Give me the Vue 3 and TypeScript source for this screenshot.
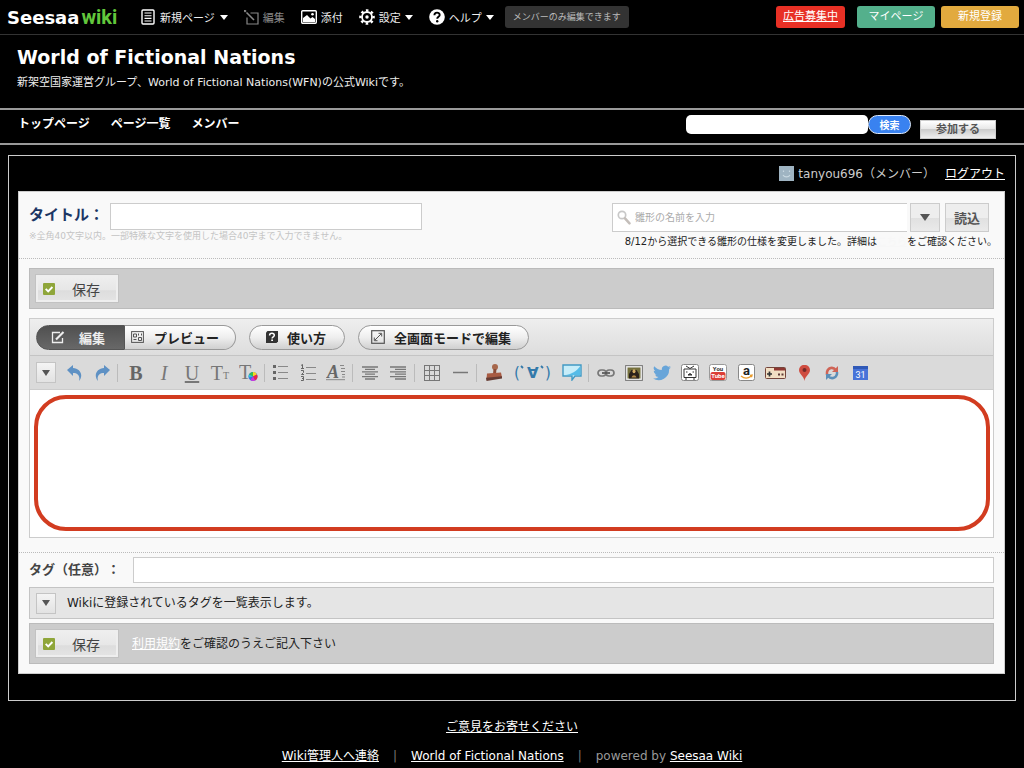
<script setup lang="ts">
import { ref } from 'vue'

const search = ref('')
const title = ref('')
const template = ref('')
const body = ref('')
const tags = ref('')
const navigation: string[] = ['トップページ', 'ページ一覧', 'メンバー']
</script>

<template>
  <div class="page">
    <header class="topbar">
      <a class="logo" href="#"><span class="logo-name">Seesaa</span><span class="logo-wiki">wiki</span></a>
      <nav class="menu" aria-label="ツール">
        <button class="menu-item new" type="button">
          <svg width="14" height="16" viewBox="0 0 14 16" fill="none" stroke="#fff" stroke-width="1.4"><rect x="1" y="1" width="12" height="14" rx="1" /><path d="M3.5 4h7M3.5 6.7h7M3.5 9.4h7M3.5 12h7" stroke-width="1.1" /></svg>
          <span>新規ページ</span><i class="caret"></i>
        </button>
        <button class="menu-item edit" type="button">
          <svg width="15" height="15" viewBox="0 0 15 15" fill="none" stroke="#888" stroke-width="1.2"><path d="M6.500 3H14v11H3V7.500" /><path d="M2.500 2.500l7.500 7.500" stroke-width="1.600" /><path d="M0 0l1.800 1.800" stroke-width="2.200" /></svg>
          <span>編集</span>
        </button>
        <button class="menu-item attach" type="button">
          <svg width="16" height="14" viewBox="0 0 16 14"><rect x=".7" y=".7" width="14.6" height="12.6" rx="1" fill="none" stroke="#fff" stroke-width="1.4" /><path d="M2 12V8l4-3 3.500 3.600L11.500 7l2.500 2v3z" fill="#fff" /><circle cx="11.5" cy="4.200" r="1.300" fill="#fff" /></svg>
          <span>添付</span>
        </button>
        <button class="menu-item settings" type="button">
          <svg width="16" height="16" viewBox="0 0 16 16" fill="none" stroke="#fff"><circle cx="8" cy="8" r="5" stroke-width="1.8" /><circle cx="8" cy="8" r="6.6" stroke-width="2.4" stroke-dasharray="2.5 2.68" stroke-dashoffset="1.25" /><circle cx="8" cy="8" r="1.7" fill="#fff" stroke="none" /></svg>
          <span>設定</span><i class="caret"></i>
        </button>
        <button class="menu-item help" type="button">
          <svg width="16" height="16" viewBox="0 0 16 16"><circle cx="8" cy="8" r="7.8" fill="#fff" /><path d="M5.4 6.2c0-3.5 5.3-3.3 5.3-.3 0 1.9-2.5 1.9-2.5 3.9" fill="none" stroke="#000" stroke-width="1.9" /><circle cx="8.2" cy="12.2" r="1.2" /></svg>
          <span>ヘルプ</span><i class="caret"></i>
        </button>
      </nav>
      <span class="member-only">メンバーのみ編集できます</span>
      <div class="account">
        <a class="pill ad" href="#">広告募集中</a>
        <a class="pill mypage" href="#">マイページ</a>
        <a class="pill signup" href="#">新規登録</a>
      </div>
    </header>

    <div class="site-head">
      <h1>World of Fictional Nations</h1>
      <p>新架空国家運営グループ、World of Fictional Nations(WFN)の公式Wikiです。</p>
    </div>

    <div class="site-nav">
      <nav class="links" aria-label="サイト">
        <a v-for="item in navigation" :key="item" href="#">{{ item }}</a>
      </nav>
      <form class="search" @submit.prevent>
        <input v-model="search" type="text" aria-label="検索" />
        <button class="search-button" type="submit">検索</button>
      </form>
      <button class="join" type="button">参加する</button>
    </div>

    <main class="frame">
      <div class="user">
        <svg width="15" height="15" viewBox="0 0 15 15"><rect width="15" height="15" fill="#9fb4c2" /><path d="M4.5 4.5v1.6M10.5 4.5v1.6M4 9c1.5 2.6 5.500 2.600 7 0" fill="none" stroke="#c9d8e1" stroke-width="1.2" /></svg>
        <span>tanyou696（メンバー）</span>
        <a href="#">ログアウト</a>
      </div>

      <div class="panel">
        <section class="title-area">
          <div class="title-side">
            <div class="title-row">
              <label for="page-title">タイトル：</label>
              <input id="page-title" v-model="title" class="field" type="text" />
            </div>
            <p class="hint">※全角40文字以内。一部特殊な文字を使用した場合40字まで入力できません。</p>
          </div>
          <div class="template-side">
            <div class="template-row">
              <div class="template-search">
                <svg width="14" height="15" viewBox="0 0 14 15" fill="none"><circle cx="5" cy="5" r="3.7" stroke="#c8c8c8" stroke-width="1.7" /><path d="M8 8.300l4.500 5" stroke="#c4beba" stroke-width="2.500" stroke-linecap="round" /></svg>
                <input v-model="template" type="text" placeholder="雛形の名前を入力" aria-label="雛形の名前" />
              </div>
              <button class="gray-button drop" type="button" aria-label="雛形の一覧"><i class="caret dark"></i></button>
              <button class="gray-button load" type="button">読込</button>
            </div>
            <p class="notice">8/12から選択できる雛形の仕様を変更しました。詳細は<a href="#">こちら</a>をご確認ください。</p>
          </div>
        </section>

        <section class="save-bar">
          <button class="save" type="button">
            <svg width="12" height="12" viewBox="0 0 12 12"><rect width="12" height="12" rx="1" fill="#8fa63a" /><path d="M2.700 5.800l2.500 2.600L9.400 4" fill="none" stroke="#fff" stroke-width="1.900" /></svg>
            <span>保存</span>
          </button>
        </section>

        <section class="editor">
          <div class="modes">
            <div class="switch">
              <button class="mode active" type="button">
                <svg width="14" height="13" viewBox="0 0 14 13" fill="none" stroke="#eee"><path d="M9 1.500H1.500v10h10V7" stroke-width="1.300" /><path d="M5 8.500L12.500 1" stroke-width="2.200" /></svg>
                <span>編集</span>
              </button>
              <button class="mode preview" type="button">
                <svg width="13" height="12" viewBox="0 0 13 12" fill="none" stroke="#555"><rect x=".6" y=".6" width="11.800" height="10.800" /><path d="M2.500 3h3v3h-3zM2.500 8.500h3M7.500 2.500v2M10.500 2.500v2M7.500 6.500h3v3h-3z" /></svg>
                <span>プレビュー</span>
              </button>
            </div>
            <button class="mode round usage" type="button">
              <svg width="12" height="12" viewBox="0 0 12 12"><path d="M1.500 0H12v10.500L10.500 12H0V1.500z" fill="#333" /><path d="M3.600 4.500c.1-3 5-2.700 4.700 0-.2 1.400-2.200 1.300-2.200 3" fill="none" stroke="#fff" stroke-width="1.500" /><path d="M5.200 8.500h1.800v1.500H5.200z" fill="#fff" /></svg>
              <span>使い方</span>
            </button>
            <button class="mode round full" type="button">
              <svg width="14" height="14" viewBox="0 0 14 14" fill="none" stroke="#555"><rect x=".7" y=".7" width="12.600" height="12.600" stroke-width="1.200" /><path d="M4 10l6-6M7.500 3.300h3.200v3.200M3.300 7.500v3.200h3.200" /></svg>
              <span>全画面モードで編集</span>
            </button>
          </div>

          <div class="tools" role="toolbar" aria-label="書式">
            <button class="square" type="button" aria-label="その他"><i class="caret dark small"></i></button>
            <button class="tool undo" type="button" aria-label="元に戻す"><svg width="16" height="16" viewBox="0 0 16 16"><path d="M0 5l6-5v3c7 .3 11 7 6 13 1.300-5-1-8-6-8v3z" fill="#5e91c4" /></svg></button>
            <button class="tool redo" type="button" aria-label="やり直す"><svg width="16" height="16" viewBox="0 0 16 16"><path d="M16 5l-6-5v3C3 3.300-1 10 4 16c-1.300-5 1-8 6-8v3z" fill="#5e91c4" /></svg></button>
            <i class="sep first"></i>
            <button class="tool glyph bold" type="button">B</button>
            <button class="tool glyph italic" type="button">I</button>
            <button class="tool glyph under" type="button">U</button>
            <button class="tool glyph" type="button">T<small>T</small></button>
            <button class="tool" type="button" aria-label="文字色"><svg class="letter" width="19" height="26" viewBox="0 0 19 26"><text x="0" y="19" font-size="20" fill="#777">T</text><g transform="translate(0 4)"><circle cx="14" cy="12.500" r="4.500" fill="#3c6be8" /><path d="M14 12.500V8a4.500 4.500 0 0 1 4 2.500z" fill="#f7d622" /><path d="M14 12.500V8a4.500 4.500 0 0 0-4 2.500z" fill="#34c14b" /><path d="M14 12.500l4-2a4.500 4.500 0 0 1-2 6z" fill="#ed2448" /><path d="M14 12.500l2 4a4.500 4.500 0 0 1-4.500-.3z" fill="#cf35dd" /><path d="M14 12.500l-4-2a4.500 4.500 0 0 0-.3 3z" fill="#2fc7d5" /></g></svg></button>
            <i class="sep"></i>
            <button class="tool" type="button" aria-label="箇条書き"><svg width="15" height="15" viewBox="0 0 15 15"><path d="M0 0h3v3H0zM0 6h3v3H0zM0 12h3v3H0z" fill="#666" /><path d="M5 1.500h10M5 7.500h10M5 13.500h10" stroke="#888" /></svg></button>
            <button class="tool" type="button" aria-label="番号付き"><svg width="15" height="17" viewBox="0 0 15 17" fill="none"><path d="M5 3.500h10M5 9.500h10M5 15.500h10" stroke="#888" /><path d="M0 1.500l1.500-1v4M0 4.500h3M0 6.500h2.500v2L.5 10.500H3M0 12.500h2.500v4H0M1 14.500h1.500" stroke="#666" /></svg></button>
            <button class="tool" type="button" aria-label="文字サイズ"><svg class="letter" width="20" height="24" viewBox="0 0 20 24"><text x="1" y="17" font-size="18" font-weight="bold" font-style="italic" fill="#666">A</text><path d="M14 4.500h4M15 7.500h4M15 10.500h4M16 13.500h3M16 16h3M0 18.700h19" stroke="#888" /></svg></button>
            <i class="sep wide"></i>
            <button class="tool" type="button" aria-label="中央寄せ"><svg width="16" height="14" viewBox="0 0 16 14" stroke="#777" stroke-width="1.300"><path d="M0 1h16M3 3.400h10M0 5.800h16M3 8.200h10M0 10.600h16M3 13h10" /></svg></button>
            <button class="tool" type="button" aria-label="右寄せ"><svg width="16" height="14" viewBox="0 0 16 14" stroke="#777" stroke-width="1.300"><path d="M0 1h16M5 3.400h11M0 5.800h16M5 8.200h11M0 10.600h16M5 13h11" /></svg></button>
            <i class="sep wide"></i>
            <button class="tool" type="button" aria-label="表"><svg width="16" height="16" viewBox="0 0 16 16" fill="none" stroke="#777"><rect x=".5" y=".5" width="15" height="15" /><path d="M.5 5.500h15M.5 10.500h15M5.500.5v15M10.500.5v15" /></svg></button>
            <button class="tool" type="button" aria-label="水平線"><svg width="15" height="3" viewBox="0 0 15 3"><path d="M0 1.500h15" stroke="#777" stroke-width="1.500" /></svg></button>
            <i class="sep wide"></i>
            <button class="tool" type="button" aria-label="スタンプ"><svg width="18" height="17" viewBox="0 0 18 17"><circle cx="10" cy="3" r="3" fill="#a7674b" /><path d="M8.500 5h3l-.5 5H8z" fill="#8b4c38" /><path d="M2 9.500l14-1 1 5-15.500 2z" fill="#a85b43" /><path d="M1 13.700l16-1.500v2.300L1.500 17z" fill="#663b33" /></svg></button>
            <button class="tool face" type="button" aria-label="顔文字"><svg class="sans" width="38" height="22" viewBox="0 0 38 22" fill="#3379aa"><text x="0" y="16" font-size="15">(</text><text x="13" y="16" font-size="15" font-weight="bold">∀</text><text x="31" y="16" font-size="15">)</text><path d="M7 4l2 2M27 4l2 2" stroke="#3379aa" stroke-width="1.800" /></svg></button>
            <button class="tool" type="button" aria-label="吹き出し"><svg width="20" height="17" viewBox="0 0 20 17"><path d="M1 1h18v11h-6l-3 4v-4H1z" fill="#c7edf9" stroke="#4199c4" stroke-width="1.400" /><path d="M18.300 2v9.300H3C9 10.500 15 7 18.300 2z" fill="#55bce8" /></svg></button>
            <i class="sep wide"></i>
            <button class="tool" type="button" aria-label="リンク"><svg width="18" height="8" viewBox="0 0 18 8" fill="none" stroke="#777" stroke-width="1.700"><rect x="1" y="1" width="8" height="6" rx="3" /><rect x="9" y="1" width="8" height="6" rx="3" /><path d="M5 4h8" stroke="#555" /></svg></button>
            <button class="tool" type="button" aria-label="画像"><svg width="18" height="16" viewBox="0 0 18 16"><rect x=".6" y=".6" width="16.800" height="14.800" fill="#eee" stroke="#777" /><path d="M2.500 2.500h13v11h-13z" fill="#75713e" /><path d="M4 13.500V9l2.500-4h5L14 9v4.500z" fill="#2c221b" /><ellipse cx="9" cy="6.300" rx="1.500" ry="2" fill="#d5ae65" /><path d="M6.500 12.500c1-3 4-3 5 0z" fill="#ae8644" /></svg></button>
            <button class="tool" type="button" aria-label="Twitter"><svg width="18" height="16" viewBox="0 0 24 20"><path d="M24 2.400a9 9 0 0 1-2.800.8A5 5 0 0 0 23.300.5a10 10 0 0 1-3.100 1.200A4.900 4.900 0 0 0 11.800 6 14 14 0 0 1 1.700 1a5 5 0 0 0 1.500 6.600A5 5 0 0 1 1 7a5 5 0 0 0 3.900 4.800 5 5 0 0 1-2.200.1 5 5 0 0 0 4.600 3.400A10 10 0 0 1 0 17.300 14 14 0 0 0 21.500 4.800 10 10 0 0 0 24 2.400z" fill="#68a5d9" /></svg></button>
            <button class="tool" type="button" aria-label="ニコニコ動画"><svg width="18" height="17" viewBox="0 0 18 17" fill="none" stroke="#333"><rect x=".5" y=".5" width="17" height="16" rx="2" fill="#fff" stroke="#888" /><path d="M5 2l4 2.500L13 2M3 5h12v8.500H3z" /><path d="M7 11l2-1.500L11 11z" fill="#333" /><path d="M5 8h1.500M11.500 8H13M4 15h2M12 15h2" /></svg></button>
            <button class="tool" type="button" aria-label="YouTube"><svg class="condensed" width="18" height="17" viewBox="0 0 18 17"><rect x=".5" y=".5" width="17" height="16" rx="2" fill="#fff" stroke="#999" /><rect x="1.500" y="8" width="15" height="8" rx="2" fill="#dc3d36" /><text x="9" y="7" font-size="6" font-weight="bold" text-anchor="middle" fill="#333">You</text><text x="9" y="14.300" font-size="6" font-weight="bold" text-anchor="middle" fill="#fff">Tube</text></svg></button>
            <button class="tool" type="button" aria-label="Amazon"><svg class="condensed" width="17" height="17" viewBox="0 0 17 17"><rect x=".5" y=".5" width="16" height="16" rx="2" fill="#fff" stroke="#888" /><text x="8.500" y="10.500" font-size="13" font-weight="bold" text-anchor="middle" fill="#222">a</text><path d="M3 12c3 2.500 7 2.500 10 .3M12 11.500l2-.3-.5 2" fill="none" stroke="#e99b2d" stroke-width="1.400" /></svg></button>
            <button class="tool game" type="button" aria-label="ゲーム"><svg width="21" height="12" viewBox="0 0 21 12"><rect x=".5" y=".5" width="20" height="11" rx="1" fill="#f2dfc4" stroke="#74453b" /><path d="M9 1h11v2.500H9z" fill="#8e3732" /><path d="M4.500 4.500v5M2 7h5" stroke="#333" stroke-width="1.700" /><path d="M13 7.500h2M16.500 7.500h2" stroke="#5f3b37" stroke-width="2" /></svg></button>
            <button class="tool" type="button" aria-label="地図"><svg width="11" height="16" viewBox="0 0 11 16"><path d="M5.500 16C5 11 0 9 0 5a5.500 5.200 0 0 1 11 0c0 4-5 6-5.500 11z" fill="#cf4c40" /><circle cx="5.500" cy="5" r="2" fill="#712a28" /></svg></button>
            <button class="tool" type="button" aria-label="更新"><svg width="14" height="14" viewBox="0 0 14 14" fill="none" stroke-width="2.500"><path d="M2 9V6c1-4.500 6-5.500 9-2" stroke="#cf6456" /><path d="M13 0v6H7z" fill="#cf6456" /><path d="M12 6v2c-1 4.500-6 5.500-9 2" stroke="#5d8fb8" /><path d="M1 14V8h6z" fill="#5d8fb8" /></svg></button>
            <button class="tool" type="button" aria-label="カレンダー"><svg class="condensed" width="15" height="14" viewBox="0 0 15 14"><path d="M0 0h15v14H0z" fill="#4873d8" /><path d="M0 0h15v3H0z" fill="#3059b7" /><text x="7.500" y="11.500" font-size="9" text-anchor="middle" fill="#fff">31</text></svg></button>
          </div>
          <textarea v-model="body" aria-label="本文"></textarea>
        </section>

        <section class="tag-area">
          <div class="tag-row">
            <label for="tags">タグ（任意）：</label>
            <input id="tags" v-model="tags" class="field" type="text" />
          </div>
          <div class="tag-list">
            <button class="square" type="button" aria-label="タグ一覧を開く"><i class="caret dark small"></i></button>
            <span>Wikiに登録されているタグを一覧表示します。</span>
          </div>
          <div class="save-bar">
            <button class="save" type="button">
              <svg width="12" height="12" viewBox="0 0 12 12"><rect width="12" height="12" rx="1" fill="#8fa63a" /><path d="M2.700 5.800l2.500 2.600L9.400 4" fill="none" stroke="#fff" stroke-width="1.900" /></svg>
              <span>保存</span>
            </button>
            <p class="terms"><a href="#">利用規約</a>をご確認のうえご記入下さい</p>
          </div>
        </section>
      </div>
    </main>

    <footer class="footer">
      <a href="#">ご意見をお寄せください</a>
      <div class="footer-links">
        <a href="#">Wiki管理人へ連絡</a><span class="bar">|</span><a href="#">World of Fictional Nations</a><span class="bar">|</span><span>powered by <a href="#">Seesaa Wiki</a></span>
      </div>
    </footer>
  </div>
</template>

<style>
body {
  background: #000;
}
</style>

<style scoped>
* {
  box-sizing: border-box;
}
.page {
  font-family: "DejaVu Sans", "Noto Sans CJK JP", sans-serif;
  font-size: 12px;
  line-height: 18px;
  color: #ccc;
  background: #000;
}
button,
input,
textarea {
  font-family: inherit;
  margin: 0;
  padding: 0;
  border: 0;
  outline: 0;
}
h1,
p {
  margin: 0;
}
svg {
  display: block;
  flex: none;
}
a {
  color: #fff;
}
.caret {
  flex: none;
  border: 4px solid transparent;
  border-top: 5px solid #fff;
  border-bottom: 0;
}
.caret.dark {
  border: 5px solid transparent;
  border-top: 7px solid #555;
  border-bottom: 0;
}
.caret.dark.small {
  border-width: 6px 4px 0;
}

.topbar {
  display: flex;
  align-items: center;
  height: 35px;
  padding: 0 5px 0 7px;
  border-bottom: 1px solid #333;
}
.logo {
  display: flex;
  align-items: baseline;
  gap: 2px;
  width: 134px;
  text-decoration: none;
  font-weight: bold;
}
.logo-name {
  font-size: 18px;
}
.logo-wiki {
  font-family: Roboto, sans-serif;
  font-size: 20px;
  color: #62c73c;
}
.menu {
  display: flex;
  gap: 16px;
}
.menu-item {
  display: flex;
  align-items: center;
  gap: 4px;
  background: none;
  color: #eee;
  font-size: 11px;
  white-space: nowrap;
}
.menu-item.new {
  gap: 5px;
}
.menu-item.edit {
  color: #888;
}
.member-only {
  margin-left: 11px;
  padding: 0 6px;
  border-radius: 3px;
  background: #333;
  color: #bbb;
  font-size: 9px;
  line-height: 22px;
  min-width: 124px;
  text-align: center;
}
.account {
  display: flex;
  gap: 6px;
  margin-left: auto;
}
.pill {
  width: 78px;
  border-radius: 3px;
  font-size: 11px;
  line-height: 22px;
  text-align: center;
  text-decoration: none;
}
.ad {
  width: 69px;
  margin-right: 6px;
  background: #e83025;
  text-decoration: underline;
}
.mypage {
  background: #54b08c;
}
.signup {
  background: #e2aa3e;
}

.site-head {
  height: 73px;
  padding: 10px 17px 0;
}
.site-head h1 {
  color: #fff;
  font-size: 19px;
  line-height: 24px;
}
.site-head p {
  margin-top: 5px;
  color: #eee;
  font-size: 11px;
}

.site-nav {
  display: flex;
  height: 37px;
  padding: 0 28px 0 18px;
  border: solid #999;
  border-width: 2px 0;
}
.links {
  display: flex;
  gap: 21px;
  margin-right: auto;
  padding-top: 5px;
}
.links a {
  font-weight: bold;
  text-decoration: none;
}
.search {
  display: flex;
  align-items: flex-start;
  padding-top: 5px;
}
.search input {
  width: 182px;
  height: 19px;
  padding: 0 6px;
  border-radius: 5px;
  background: #fff;
}
.search-button {
  width: 43px;
  height: 19px;
  border: 1px solid #dde9fb;
  border-radius: 10px;
  background: #3982f0;
  color: #fff;
  font-size: 10px;
  font-weight: bold;
}
.join {
  width: 76px;
  height: 19px;
  margin: 10px 0 0 9px;
  border: 1px solid #ccc;
  background: linear-gradient(#fff, #e8e8e8 45%, #ccc 50%, #eee);
  color: #555;
  font-size: 11px;
  font-weight: bold;
  line-height: 17px;
}

.frame {
  margin: 10px 8px 0;
  padding: 0 10px 26px 9px;
  border: 1px solid #ccc;
}
.user {
  display: flex;
  align-items: center;
  justify-content: flex-end;
  gap: 4px;
  height: 35px;
  text-spacing-trim: space-all;
}
.user a {
  margin-left: 6px;
}
.panel {
  padding-bottom: 9px;
  border: 1px solid #ccc;
  background: #f9f9f9;
  color: #222;
}
.field {
  border: 1px solid #ccc;
  padding: 0 6px;
  background: #fff;
}

.title-area {
  display: flex;
  justify-content: space-between;
  height: 67px;
  padding: 11px 15px 0 10px;
  border-bottom: 1px dotted #bbb;
}
.title-row {
  display: flex;
}
.title-row label {
  width: 81px;
  color: #1c3664;
  font-size: 15px;
  font-weight: bold;
  line-height: 24px;
  white-space: nowrap;
}
.title-row .field {
  width: 312px;
  height: 27px;
}
.hint {
  color: #c4c4c4;
  font-size: 9px;
  line-height: 12px;
}
.template-side {
  display: flex;
  flex-direction: column;
  align-items: flex-end;
}
.template-row {
  display: flex;
  height: 29px;
}
.template-search {
  display: flex;
  align-items: center;
  gap: 4px;
  width: 295px;
  margin-right: 3px;
  padding-left: 4px;
  border: 1px solid #ccc;
  border-right: 0;
  background: #fff;
}
.template-search input {
  width: 260px;
  background: none;
  font-size: 10px;
}
.template-search input::placeholder {
  color: #aaa;
}
.gray-button {
  display: flex;
  align-items: center;
  justify-content: center;
  width: 30px;
  border: 1px solid #ccc;
  background: linear-gradient(#eee 50%, #e0e0e0 50%, #eaeaea);
  color: #555;
  font-size: 13px;
  font-weight: bold;
}
.load {
  width: 44px;
  margin-left: 5px;
}
.notice {
  margin-right: -8px;
  padding-top: 1px;
  font-size: 10px;
  white-space: nowrap;
}
.notice a {
  color: #f7f7f7;
}

.save-bar {
  display: flex;
  align-items: center;
  height: 41px;
  margin: 9px 10px 0;
  padding: 0 6px;
  border: 1px solid #bbb;
  background: #ccc;
}
.save {
  display: flex;
  align-items: center;
  gap: 17px;
  width: 82px;
  height: 27px;
  padding-left: 5px;
  border: 2px solid #eee;
  outline: 1px solid #c2c2c2;
  background: linear-gradient(#eee, #e7e7e7 55%, #ddd 60%, #e3e3e3);
  color: #444;
  font-size: 14px;
}
.terms {
  margin-left: 14px;
}

.editor {
  margin: 9px 10px 0;
  border: 1px solid #ccc;
  background: #fff;
}
.modes {
  display: flex;
  align-items: center;
  gap: 13px;
  height: 37px;
  padding-left: 6px;
  border-bottom: 1px solid #c4c4c4;
  background: linear-gradient(#eee, #ddd);
}
.switch {
  display: flex;
}
.mode {
  display: flex;
  align-items: center;
  height: 25px;
  border: 1px solid #999;
  background: linear-gradient(#fff, #eee 50%, #d0d0d0);
  color: #222;
  font-size: 13px;
  font-weight: bold;
  white-space: nowrap;
}
.mode.active {
  gap: 14px;
  width: 89px;
  padding-left: 14px;
  border-color: #555;
  border-radius: 13px 0 0 13px;
  background: linear-gradient(#505050, #686868);
  color: #eee;
}
.preview {
  gap: 10px;
  width: 111px;
  padding-left: 6px;
  border-left: 0;
  border-radius: 0 13px 13px 0;
}
.round {
  border-radius: 13px;
}
.usage {
  gap: 9px;
  width: 96px;
  padding-left: 16px;
}
.full {
  gap: 9px;
  width: 171px;
  padding-left: 12px;
}
.tools {
  display: flex;
  align-items: center;
  height: 34px;
  padding-left: 6px;
  border-bottom: 1px solid #ccc;
  background: #dadada;
}
.square {
  display: flex;
  align-items: center;
  justify-content: center;
  width: 20px;
  height: 21px;
  border: 1px solid #c4c4c4;
  background: linear-gradient(#f4f4f4, #e2e2e2);
}
.tool {
  display: flex;
  align-items: center;
  justify-content: center;
  width: 28px;
  height: 28px;
  background: none;
}
.undo {
  margin-left: 5px;
}
.redo {
  width: 26px;
}
.glyph {
  font-family: "Liberation Serif", serif;
  font-size: 20px;
  line-height: 22px;
  color: #777;
}
.glyph small {
  align-self: flex-end;
  font-size: 10px;
}
.bold {
  font-weight: bold;
  color: #666;
}
.italic {
  font-style: italic;
}
.under {
  text-decoration: underline;
}
.letter {
  font-family: "Liberation Serif", serif;
}
.sans {
  font-family: "DejaVu Sans", sans-serif;
}
.condensed {
  font-family: Roboto, sans-serif;
}
.sep {
  flex: none;
  width: 1px;
  height: 18px;
  margin: 0 1px 0 2px;
  background: #bbb;
}
.sep.first {
  margin-right: 4px;
}
.sep.wide {
  margin: 0 3px 0 2px;
}
.face {
  width: 50px;
}
.game {
  width: 30px;
}
textarea {
  display: block;
  width: calc(100% - 7px);
  height: 136px;
  margin: 5px 3px 6px 4px;
  padding: 12px 20px;
  border: 4px solid #d23c20;
  border-radius: 32px;
  background: #fff;
  resize: none;
}

.tag-area {
  margin-top: 14px;
  border-top: 1px dotted #bbb;
}
.tag-row {
  display: flex;
  align-items: center;
  margin: 4px 10px 0;
}
.tag-row label {
  flex: none;
  width: 104px;
  color: #444;
  font-size: 13px;
  font-weight: bold;
  text-spacing-trim: space-all;
}
.tag-row .field {
  flex: 1;
  height: 26px;
}
.tag-list {
  display: flex;
  align-items: center;
  gap: 11px;
  height: 32px;
  margin: 4px 10px 0;
  padding-left: 6px;
  border: 1px solid #c4c4c4;
  background: #e5e5e5;
}
.tag-area .save-bar {
  margin-top: 4px;
}

.footer {
  padding: 17px 0 3px;
  text-align: center;
}
.footer-links {
  display: flex;
  justify-content: center;
  gap: 14px;
  margin-top: 11px;
  color: #999;
}
.bar {
  color: #777;
}
</style>
